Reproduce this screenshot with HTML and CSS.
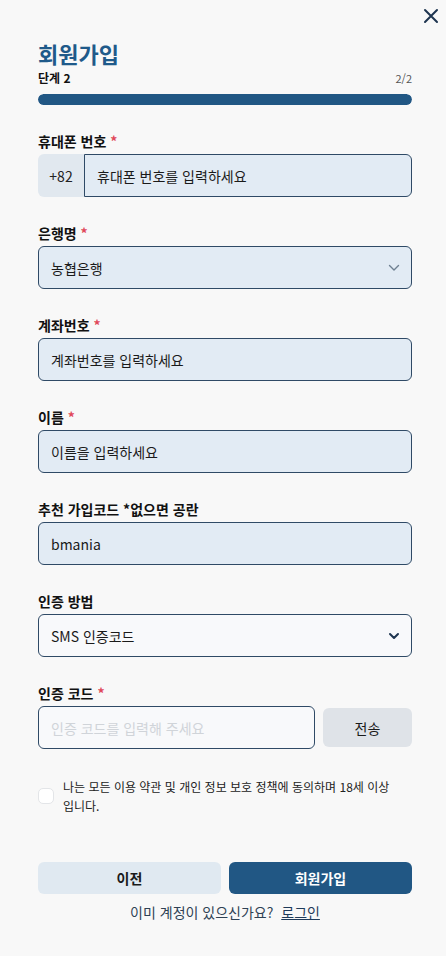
FILE: index.html
```html
<!DOCTYPE html>
<html lang="ko">
<head>
<meta charset="utf-8">
<title>회원가입</title>
<link rel="stylesheet" href="styles.css">
</head>
<body>
<div class="page">
  <button class="close" aria-label="닫기">
    <svg width="16" height="16" viewBox="0 0 16 16"><path d="M2 2L14 14M14 2L2 14" stroke="#1e3550" stroke-width="2" stroke-linecap="round"/></svg>
  </button>
  <h1 class="title">회원가입</h1>
  <div class="step-row"><span class="step">단계 2</span><span class="count">2/2</span></div>
  <div class="progress"><div class="progress-fill"></div></div>

  <form class="form">
    <div class="field">
      <label class="label">휴대폰 번호 <span class="req">*</span></label>
      <div class="phone">
        <span class="prefix">+82</span>
        <div class="control phone-input">휴대폰 번호를 입력하세요</div>
      </div>
    </div>
    <div class="field">
      <label class="label">은행명 <span class="req">*</span></label>
      <div class="control select">
        <span>농협은행</span>
        <svg width="12" height="8" viewBox="0 0 12 8"><path d="M1.5 1.5L6 6L10.5 1.5" fill="none" stroke="#6f8091" stroke-width="1.4" stroke-linecap="round" stroke-linejoin="round"/></svg>
      </div>
    </div>
    <div class="field">
      <label class="label">계좌번호 <span class="req">*</span></label>
      <div class="control">계좌번호를 입력하세요</div>
    </div>
    <div class="field">
      <label class="label">이름 <span class="req">*</span></label>
      <div class="control">이름을 입력하세요</div>
    </div>
    <div class="field">
      <label class="label">추천 가입코드 *없으면 공란</label>
      <div class="control">bmania</div>
    </div>
    <div class="field">
      <label class="label">인증 방법</label>
      <div class="control select light">
        <span>SMS 인증코드</span>
        <svg width="12" height="8" viewBox="0 0 12 8"><path d="M2 2L6 6L10 2" fill="none" stroke="#1e3550" stroke-width="2" stroke-linecap="round" stroke-linejoin="round"/></svg>
      </div>
    </div>
    <div class="field">
      <label class="label">인증 코드 <span class="req">*</span></label>
      <div class="code-row">
        <div class="control light placeholder">인증 코드를 입력해 주세요</div>
        <button type="button" class="send">전송</button>
      </div>
    </div>
    <div class="agree">
      <span class="checkbox"></span>
      <p class="agree-text">나는 모든 이용 약관 및 개인 정보 보호 정책에 동의하며 18세 이상 입니다.</p>
    </div>
    <div class="actions">
      <button type="button" class="btn prev">이전</button>
      <button type="button" class="btn submit">회원가입</button>
    </div>
    <p class="login">이미 계정이 있으신가요?&nbsp; <a class="login-link">로그인</a></p>
  </form>
</div>
</body>
</html>
```

FILE: styles.css
```css
* { box-sizing: border-box; }
html, body { margin: 0; padding: 0; }
body {
  background: #f8f8f8;
  font-family: "Noto Sans CJK KR", "Noto Sans", sans-serif;
  color: #1a1a1a;
}
.page {
  position: relative;
  width: 446px;
  min-height: 956px;
  padding: 38px 34px 0 38px;
}
.close {
  position: absolute;
  top: 8px;
  right: 7px;
  width: 16px;
  height: 16px;
  padding: 0;
  border: 0;
  background: none;
  display: flex;
}
.title {
  margin: 0;
  font-size: 22px;
  line-height: 30px;
  font-weight: 700;
  color: #1f5a8a;
}
.step-row {
  display: flex;
  justify-content: space-between;
  margin-top: 2px;
  line-height: 16px;
  font-size: 12px;
}
.step { font-weight: 700; color: #111; }
.count { color: #555; font-size: 11px; }
.progress {
  margin-top: 8px;
  height: 11px;
  border-radius: 6px;
  background: #dfe6ee;
  overflow: hidden;
}
.progress-fill { width: 100%; height: 100%; background: #215784; border-radius: 6px; }

.form { display: flex; flex-direction: column; margin-top: 26px; }
.field { display: flex; flex-direction: column; margin-bottom: 26px; }
.label {
  font-size: 14px;
  font-weight: 700;
  line-height: 20px;
  margin-bottom: 3px;
  color: #111;
}
.req { color: #e0485a; }
.control {
  height: 43px;
  display: flex;
  align-items: center;
  padding: 0 12px;
  background: #e2ebf4;
  border: 1px solid #2f4a66;
  border-radius: 6px;
  font-size: 14px;
  color: #1a1a1a;
}
.control.light { background: #f8f9fb; }
.placeholder { color: #d0d4d9; }
.phone { display: flex; height: 43px; }
.prefix {
  width: 46px;
  display: flex;
  align-items: center;
  justify-content: center;
  background: #e1e8ef;
  border-radius: 6px 0 0 6px;
  font-size: 14px;
  color: #222;
}
.phone-input { flex: 1; border-radius: 0 6px 6px 0; }
.select { justify-content: space-between; padding-right: 11px; }
.code-row { display: flex; gap: 8px; align-items: center; }
.code-row .control { flex: 1; }
.send {
  width: 89px;
  height: 39px;
  border: 0;
  border-radius: 6px;
  background: #dfe3e8;
  font-family: inherit;
  font-size: 14px;
  color: #1a1a1a;
}
.agree {
  display: flex;
  align-items: center;
  gap: 9px;
  margin-top: 2px;
}
.checkbox {
  flex: none;
  width: 16px;
  height: 16px;
  border: 1px solid #e3e5e8;
  border-radius: 5px;
  background: #fff;
}
.agree-text {
  margin: 0;
  font-size: 12px;
  line-height: 19px;
  color: #222;
  word-break: keep-all;
  padding-right: 20px;
}
.actions {
  display: flex;
  gap: 8px;
  margin-top: 47px;
}
.btn {
  flex: 1;
  height: 32px;
  border: 0;
  border-radius: 6px;
  font-family: inherit;
  font-size: 14px;
  font-weight: 700;
}
.prev { background: #e0e9f1; color: #1a1a1a; }
.submit { background: #215784; color: #fff; }
.login {
  margin: 8px 0 0;
  text-align: center;
  font-size: 14px;
  line-height: 20px;
  color: #2e4154;
}
.login-link { color: #1e3a5a; text-decoration: underline; }
```
